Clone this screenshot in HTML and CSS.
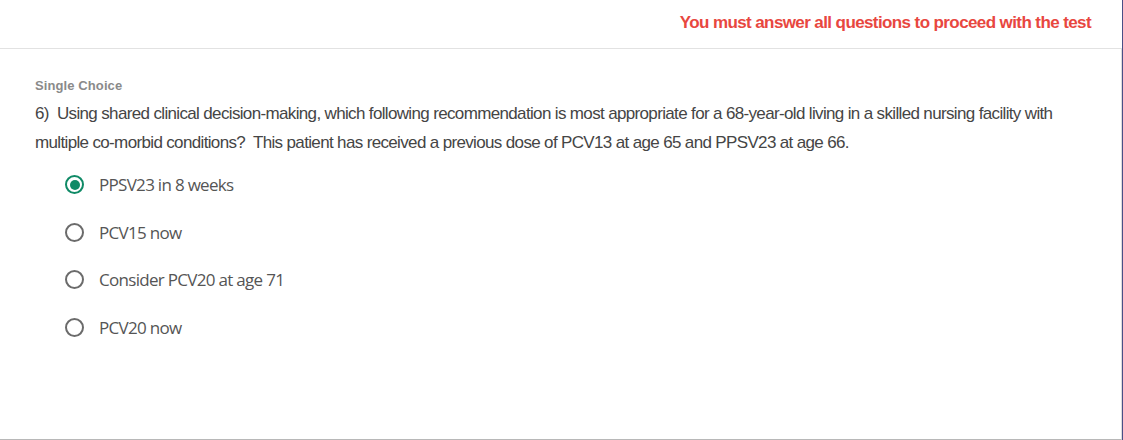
FILE: index.html
```html
<!DOCTYPE html>
<html lang="en">
<head>
<meta charset="utf-8">
<title>Question</title>
<link rel="stylesheet" href="styles.css">
</head>
<body>
<div class="page">
  <div class="main">
    <header class="topbar">
      <span class="warning">You must answer all questions to proceed with the test</span>
    </header>
    <section class="card">
      <div class="qtype">Single Choice</div>
      <p class="question">6)&nbsp; Using shared clinical decision-making, which following recommendation is most appropriate for a 68-year-old living in a skilled nursing facility with multiple co-morbid conditions?&nbsp; This patient has received a previous dose of PCV13 at age 65 and PPSV23 at age 66.</p>
      <ul class="options">
        <li class="option selected"><span class="radio"></span><span class="label">PPSV23 in 8 weeks</span></li>
        <li class="option"><span class="radio"></span><span class="label">PCV15 now</span></li>
        <li class="option"><span class="radio"></span><span class="label">Consider PCV20 at age 71</span></li>
        <li class="option"><span class="radio"></span><span class="label">PCV20 now</span></li>
      </ul>
    </section>
  </div>
  <div class="edge"></div>
</div>
</body>
</html>
```
FILE: styles.css
```css
html, body {
  margin: 0;
  padding: 0;
  background: #ffffff;
}
.page {
  display: flex;
  width: 1123px;
  height: 440px;
}
.main {
  flex: 1;
  display: flex;
  flex-direction: column;
}
.edge {
  width: 1px;
  background: #4a4f86;
}
.topbar {
  height: 48px;
  border-bottom: 1px solid #e2e2e2;
  display: flex;
  align-items: center;
  justify-content: flex-end;
  padding-right: 31px;
  box-sizing: content-box;
}
.warning {
  font-family: "Liberation Sans", Arial, sans-serif;
  font-weight: bold;
  font-size: 17px;
  color: #e8473f;
  letter-spacing: -0.6px;
  margin-top: -3px;
}
.card {
  flex: 1;
  border-right: 1px solid #dcdcdc;
  border-bottom: 1px solid #b8b8b8;
  padding: 29px 0 0 35px;
}
.qtype {
  font-family: "Liberation Sans", Arial, sans-serif;
  font-weight: bold;
  font-size: 13px;
  line-height: 16px;
  color: #8a8a8a;
  letter-spacing: 0.1px;
}
.question {
  margin: 5px 0 0 0;
  max-width: 1030px;
  font-family: "Liberation Sans", Arial, sans-serif;
  font-size: 17px;
  line-height: 29px;
  color: #454545;
  letter-spacing: -0.65px;
}
.options {
  list-style: none;
  margin: 4px 0 0 0;
  padding: 0 0 0 30px;
}
.option {
  height: 47.5px;
  display: flex;
  align-items: center;
  gap: 15px;
}
.radio {
  width: 19px;
  height: 19px;
  box-sizing: border-box;
  border: 2px solid #6b6b6b;
  border-radius: 50%;
  display: flex;
  align-items: center;
  justify-content: center;
}
.option.selected .radio {
  border-color: #0f8a66;
  border-width: 2.5px;
}
.option.selected .radio::after {
  content: "";
  width: 10px;
  height: 10px;
  border-radius: 50%;
  background: #0f8a66;
}
.label {
  font-family: "Open Sans", "Noto Sans", sans-serif;
  font-size: 17px;
  color: #555555;
  letter-spacing: -0.7px;
}
```
